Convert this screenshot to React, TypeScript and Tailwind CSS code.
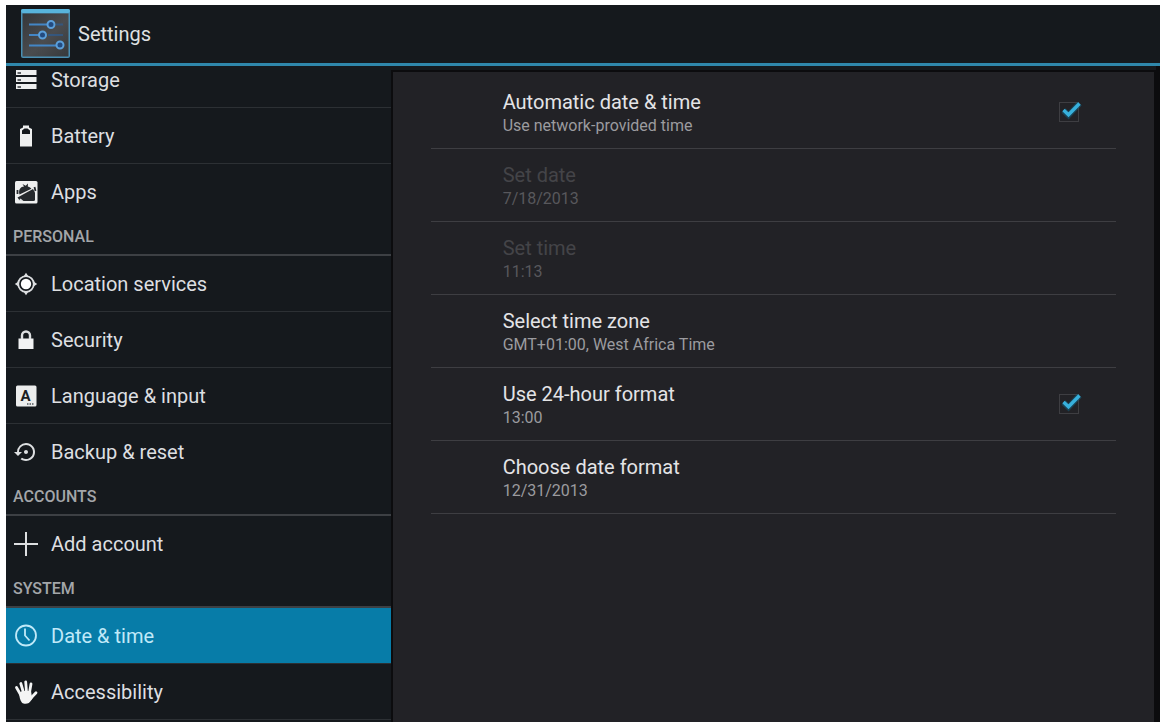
import { useState } from 'react';
import type { ReactNode } from 'react';
import clsx from 'clsx';
import { MdSettingsBackupRestore } from 'react-icons/md';

type NavItem = {
  icon: ReactNode;
  label: string;
};

type NavSection = {
  items: NavItem[];
  title?: string;
};

const sections: NavSection[] = [
  {
    items: [
      { icon: <StorageIcon />, label: 'Storage' },
      { icon: <BatteryIcon />, label: 'Battery' },
      { icon: <AppsIcon />, label: 'Apps' },
    ],
  },
  {
    title: 'Personal',
    items: [
      { icon: <LocationIcon />, label: 'Location services' },
      { icon: <LockIcon />, label: 'Security' },
      { icon: <LanguageIcon />, label: 'Language & input' },
      {
        icon: <MdSettingsBackupRestore className="size-6" />,
        label: 'Backup & reset',
      },
    ],
  },
  {
    title: 'Accounts',
    items: [{ icon: <PlusIcon />, label: 'Add account' }],
  },
  {
    title: 'System',
    items: [
      { icon: <ClockIcon />, label: 'Date & time' },
      { icon: <HandIcon />, label: 'Accessibility' },
    ],
  },
];

export default function App() {
  const [active, setActive] = useState('Date & time');
  const [autoTime, setAutoTime] = useState(true);
  const [use24Hour, setUse24Hour] = useState(true);

  return (
    <div className="flex min-h-screen bg-white pt-[5px] pr-[5px] pb-1 pl-1.5 font-[Roboto,sans-serif]">
      <div className="flex flex-1 flex-col bg-[#15191d]">
        <header className="flex h-[61px] shrink-0 items-center gap-2 border-b-[3px] border-[#2f87ab] pl-3.5 text-xl text-[#dfe1e3]">
          <SettingsLogo />
          <h1>Settings</h1>
        </header>

        <div className="flex flex-1">
          <nav className="w-1/3 shrink-0 overflow-hidden">
            <div className="-mt-3.5">
              {sections.map((section) => (
                <section key={section.items[0].label}>
                  {section.title ? (
                    <h2 className="flex h-[37px] items-center border-b-2 border-[#3d4044] px-[7px] text-base font-medium text-[#a3a6a9] uppercase">
                      {section.title}
                    </h2>
                  ) : null}
                  <ul className="divide-y divide-[#2c3034]">
                    {section.items.map((item) => (
                      <li key={item.label}>
                        <a
                          href="#"
                          aria-current={
                            item.label === active ? 'page' : undefined
                          }
                          onClick={() => setActive(item.label)}
                          className={clsx(
                            'flex h-[55px] items-center gap-[13px] pl-2 text-xl',
                            item.label === active
                              ? 'bg-[#077ca8] text-[#c0e9f8]'
                              : 'text-[#dddfe1]',
                          )}
                        >
                          {item.icon}
                          {item.label}
                        </a>
                      </li>
                    ))}
                  </ul>
                </section>
              ))}
              <div className="border-t border-[#2c3034]" />
            </div>
          </nav>

          <main className="mt-1 flex-1 border-2 border-b-0 border-[#0c0c0e] bg-[#222226] px-[38px] pt-1">
            <ToggleRow
              checked={autoTime}
              id="auto-time"
              onChange={setAutoTime}
              summary="Use network-provided time"
              title="Automatic date & time"
            />
            <PreferenceRow
              disabled={autoTime}
              summary="7/18/2013"
              title="Set date"
            />
            <PreferenceRow disabled={autoTime} summary="11:13" title="Set time" />
            <PreferenceRow
              summary="GMT+01:00, West Africa Time"
              title="Select time zone"
            />
            <ToggleRow
              checked={use24Hour}
              id="use-24-hour"
              onChange={setUse24Hour}
              summary="13:00"
              title="Use 24-hour format"
            />
            <PreferenceRow summary="12/31/2013" title="Choose date format" />
          </main>
          <div className="w-1 shrink-0 bg-[#0c0c0e]" />
        </div>
      </div>
    </div>
  );
}

function PreferenceText({ summary, title }: { summary: string; title: string }) {
  return (
    <span className="block pt-1">
      <span className="block text-xl leading-6 text-[#e4e4e6] group-disabled:text-[#444448]">
        {title}
      </span>
      <span className="block text-base leading-6 text-[#9b9b9f] group-disabled:text-[#58585c]">
        {summary}
      </span>
    </span>
  );
}

function PreferenceRow({
  disabled,
  summary,
  title,
}: {
  disabled?: boolean;
  summary: string;
  title: string;
}) {
  return (
    <button
      type="button"
      disabled={disabled}
      className="group flex h-[73px] w-full items-center border-b border-[#3e3e42] pl-[72px] text-left"
    >
      <PreferenceText summary={summary} title={title} />
    </button>
  );
}

function ToggleRow({
  checked,
  id,
  onChange,
  summary,
  title,
}: {
  checked: boolean;
  id: string;
  onChange: (checked: boolean) => void;
  summary: string;
  title: string;
}) {
  return (
    <div className="flex h-[73px] items-center justify-between border-b border-[#3e3e42] pr-[37px] pl-[72px]">
      <label htmlFor={id}>
        <PreferenceText summary={summary} title={title} />
      </label>
      <span className="relative size-5">
        <input
          id={id}
          type="checkbox"
          checked={checked}
          onChange={(event) => onChange(event.target.checked)}
          className="block size-5 appearance-none border border-[#3e3e42]"
        />
        {checked ? (
          <svg
            aria-hidden="true"
            viewBox="0 0 24 20"
            className="pointer-events-none absolute top-0 left-0 h-5 w-6"
            fill="none"
          >
            <path
              d="M4.5 8.5 9.5 13.2 20.5 1.5"
              stroke="#12607d"
              strokeOpacity="0.5"
              strokeWidth="6"
            />
            <path
              d="M4.5 8 9.5 12.8 20.5 1.5"
              stroke="#37b0dc"
              strokeWidth="3.4"
            />
          </svg>
        ) : null}
      </span>
    </div>
  );
}

function SettingsLogo() {
  return (
    <svg aria-hidden="true" viewBox="0 0 50 50" className="size-[50px]">
      <defs>
        <linearGradient id="tile" x1="0" y1="0" x2="1" y2="1">
          <stop offset="0" stopColor="#35373a" />
          <stop offset="0.55" stopColor="#4a4c4f" />
          <stop offset="1" stopColor="#37393c" />
        </linearGradient>
      </defs>
      <rect x="1" y="0" width="49" height="49" rx="2" fill="#4a8fb3" />
      <rect x="1" y="0" width="49" height="4" rx="2" fill="#58b4dc" />
      <rect x="2.5" y="4.5" width="46" height="43" fill="url(#tile)" />
      <g stroke="#2d5c91" strokeWidth="2">
        <path d="M36 15.5H43M28 26H43" opacity="0.7" />
        <path stroke="#4386c6" d="M9 15.5H28M9 26H20M9 36.5H36" />
      </g>
      <g fill="#234b80" stroke="#5b9fda" strokeWidth="2">
        <circle cx="31" cy="15.5" r="3.5" />
        <circle cx="22.5" cy="26" r="3.5" />
        <circle cx="40" cy="36" r="3.5" />
      </g>
    </svg>
  );
}

function Icon({ children }: { children: ReactNode }) {
  return (
    <svg
      aria-hidden="true"
      viewBox="0 0 24 24"
      className="size-6 shrink-0"
      fill="currentColor"
    >
      {children}
    </svg>
  );
}

function StorageIcon() {
  return (
    <Icon>
      <path
        d="M2 2h20.500v5H2zM2 9h20.500v5H2zM2 16h20.500v5H2z"
        fill="#eeefef"
      />
      <path
        d="M3.500 5h3.500M3.500 12h3.500M3.500 19h3.500"
        stroke="#33373b"
        strokeWidth="1.400"
      />
    </Icon>
  );
}

function BatteryIcon() {
  return (
    <Icon>
      <path
        fill="#eeefef"
        fillRule="evenodd"
        d="M9 1.500h6v2l3 1.500v17.500H6V5l3-1.500zM8 10h8V6.500L13.500 4.500h-3L8 6.500z"
      />
    </Icon>
  );
}

function AppsIcon() {
  return (
    <Icon>
      <rect
        x="1"
        y="1"
        width="22.500"
        height="22.500"
        rx="1.500"
        fill="#eeefef"
      />
      <path
        d="M3.500 17.500 19 9l2 3.500V19.500q0 1.500-1.500 1.500H6z"
        fill="#25292d"
      />
      <path
        d="M5.500 14.500C4 9.500 7 6.500 10 6.500l-1.500-2.500 3.200 1.700L14 3.500l-.2 3c2 .5 3 1.500 3.600 2.300z"
        fill="#25292d"
      />
      <path d="M3.500 10v4M20.500 7l1 4" stroke="#25292d" strokeWidth="1.800" />
      <path d="m6.500 18.500 3 2.500h-5z" />
    </Icon>
  );
}

function LocationIcon() {
  return (
    <Icon>
      <circle cx="12" cy="12" r="5.200" fill="#fff" />
      <circle
        cx="12"
        cy="12"
        r="7.800"
        fill="none"
        stroke="currentColor"
        strokeWidth="1.800"
      />
      <path d="M12 .8 14.500 4.500h-5zM12 23.200 9.500 19.500h5zM.8 12 4.500 9.500v5zM23.200 12 19.500 14.500v-5z" />
    </Icon>
  );
}

function LockIcon() {
  return (
    <Icon>
      <path d="M4.500 10.500h15v10.500h-15z" fill="#f1f2f3" />
      <path
        d="M8 11V7.500a4 4 0 0 1 8 0V11"
        fill="none"
        stroke="currentColor"
        strokeWidth="2.400"
      />
    </Icon>
  );
}

function LanguageIcon() {
  return (
    <Icon>
      <rect x="2" y="1.500" width="20.500" height="21" rx="1.500" fill="#eceded" />
      <text
        x="11.500"
        y="16.500"
        textAnchor="middle"
        fontSize="15"
        fontWeight="700"
        fill="#1b1f23"
      >
        A
      </text>
      <path
        d="M13 20h7"
        stroke="#777b7f"
        strokeWidth="2"
        strokeDasharray="1.500 1"
      />
    </Icon>
  );
}

function PlusIcon() {
  return (
    <Icon>
      <path d="M11 0h2v11h11v2H13v11h-2V13H0v-2h11z" />
    </Icon>
  );
}

function ClockIcon() {
  return (
    <Icon>
      <g fill="none" stroke="currentColor" strokeWidth="1.800">
        <circle cx="12" cy="11.500" r="10" />
        <path d="M11 4.500v7l4.500 5" />
      </g>
    </Icon>
  );
}

function HandIcon() {
  return (
    <Icon>
      <g
        fill="none"
        stroke="#f4f5f5"
        strokeWidth="2.800"
        strokeLinecap="round"
        strokeLinejoin="round"
      >
        <path d="M6.500 14.500 2.500 7.500M9.300 12 6.800 3.500M12.500 12 11.700 2M15.500 12.500 17 4M16.500 18.500 22 12.800" />
      </g>
      <path
        d="M5 13.500 8 11h9l.8 5 2-.5c-1 3-3 6-5 7.500-2 1-5.200 1-6.800-.3C6 20.500 5.500 17 5 13.500z"
        fill="#f4f5f5"
      />
    </Icon>
  );
}
